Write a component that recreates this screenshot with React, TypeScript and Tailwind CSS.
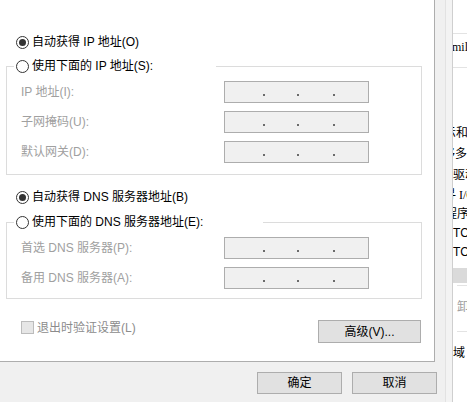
import React from "react";

function Radio({ checked }: { checked?: boolean }) {
  return (
    <span className="w-[13px] h-[13px] shrink-0 rounded-full border border-[#333333] bg-white flex items-center justify-center">
      {checked && <span className="w-[7px] h-[7px] rounded-full bg-[#333333]" />}
    </span>
  );
}

function IpBox() {
  return (
    <div className="w-[145px] h-[22px] border border-[#adadad] bg-[#f0f0f0] flex items-start pt-[12px] pl-[38px]">
      <span className="w-[2px] h-[2px] bg-[#6b6b6b]" />
      <span className="w-[2px] h-[2px] bg-[#6b6b6b] ml-[32px]" />
      <span className="w-[2px] h-[2px] bg-[#6b6b6b] ml-[34px]" />
    </div>
  );
}

function FieldRow({ label }: { label: string }) {
  return (
    <div className="flex items-center h-[22px]">
      <span className="w-[203px] text-[#a0a0a0]">{label}</span>
      <IpBox />
    </div>
  );
}

function Group({ title, width, fields }: { title: string; width: string; fields: string[] }) {
  return (
    <fieldset className="ml-[6px] w-[416px] border border-[#dcdcdc]">
      <legend className={`ml-[7px] ${width} h-[16px] pl-[2px] flex items-center gap-[3px] bg-white`}>
        <Radio />
        <span>{title}</span>
      </legend>
      <div className="pl-[14px] pt-[7px] flex flex-col gap-[8px]">
        {fields.map((f) => (
          <FieldRow key={f} label={f} />
        ))}
      </div>
    </fieldset>
  );
}

function WinButton({ label, w, h }: { label: string; w: string; h: string }) {
  return (
    <button className={`${w} ${h} border border-[#adadad] bg-[#e1e1e1] text-black flex items-center justify-center`}>
      {label}
    </button>
  );
}

export default function App() {
  return (
    <div className="w-[467px] h-[402px] flex bg-[#f0f0f0] overflow-hidden text-[12px] leading-[16px] text-black font-['Liberation_Sans','Noto_Sans_CJK_SC',sans-serif]">
      <div className="w-[445px] shrink-0 flex flex-col">
        {/* property panel */}
        <div className="w-[435px] h-[362px] shrink-0 bg-white border-r border-b border-[#adadad] pt-[34px]">
          <div className="pl-[16px] h-[16px] flex items-center gap-[3px]">
            <Radio checked />
            <span>自动获得 IP 地址(O)</span>
          </div>

          <div className="mt-[8px] pb-[11px]">
            <div className="[&>fieldset>div]:pb-[11px]">
              <Group
                title="使用下面的 IP 地址(S):"
                width="w-[202px]"
                fields={["IP 地址(I):", "子网掩码(U):", "默认网关(D):"]}
              />
            </div>
          </div>

          <div className="-mt-[11px] pt-[14px]">
            <div className="pl-[16px] h-[16px] flex items-center gap-[3px]">
              <Radio checked />
              <span>自动获得 DNS 服务器地址(B)</span>
            </div>
          </div>

          <div className="mt-[9px] [&>fieldset>div]:pb-[9px]">
            <Group
              title="使用下面的 DNS 服务器地址(E):"
              width="w-[249px]"
              fields={["首选 DNS 服务器(P):", "备用 DNS 服务器(A):"]}
            />
          </div>

          <div className="mt-[21px] flex items-start pl-[21px] pr-[13px]">
            <div className="mt-[1px] h-[13px] flex items-center">
              <span className="w-[13px] h-[13px] border border-[#bcbcbc] bg-[#e6e6e6]" />
              <span className="ml-[3px] text-[#8c8c8c]">退出时验证设置(L)</span>
            </div>
            <div className="ml-auto">
              <WinButton label="高级(V)..." w="w-[103px]" h="h-[23px]" />
            </div>
          </div>
        </div>

        {/* dialog buttons */}
        <div className="flex-1 flex justify-end items-start pt-[10px] pr-[8px] gap-[10px]">
          <WinButton label="确定" w="w-[85px]" h="h-[22px]" />
          <WinButton label="取消" w="w-[85px]" h="h-[22px]" />
        </div>
      </div>

      {/* window edge */}
      <div className="w-[8px] shrink-0 border-l border-r border-l-[#e2e2e2] border-r-[#cfcfcf] bg-[#f3f3f3]" />

      {/* window behind */}
      <div className="flex-1 bg-white flex flex-col overflow-hidden whitespace-nowrap">
        <div className="h-[33px] shrink-0" />
        <div className="h-[35px] shrink-0 border-t border-b border-[#e3e3e3] leading-[26px] font-['Liberation_Serif',serif] -ml-[13px]">
          Family
        </div>
        <div className="h-[54px] shrink-0" />
        <div className="h-[22px] leading-[22px] -ml-[21px]">显示和</div>
        <div className="h-[21px] leading-[21px] -ml-[22px]">转移多</div>
        <div className="h-[20px] leading-[20px]">驱动</div>
        <div className="h-[20px] leading-[20px] -ml-[9px]">
          寻<span className="font-['Liberation_Serif',serif]"> I/O</span>
        </div>
        <div className="h-[19px] leading-[19px] -ml-[8px]">程序</div>
        <div className="h-[19px] leading-[19px]">TCP/IP</div>
        <div className="h-[19px] leading-[19px]">TCP/IP</div>
        <div className="h-[6px] shrink-0" />
        <div className="h-[15px] shrink-0 bg-[#dadada]" />
        <div className="h-[2px] shrink-0" />
        <div className="h-[47px] shrink-0 border-t border-b border-[#e3e3e3] leading-[42px] ml-[4px] text-[#a0a0a0]">
          卸载
        </div>
        <div className="leading-[42px]">域</div>
      </div>
    </div>
  );
}
